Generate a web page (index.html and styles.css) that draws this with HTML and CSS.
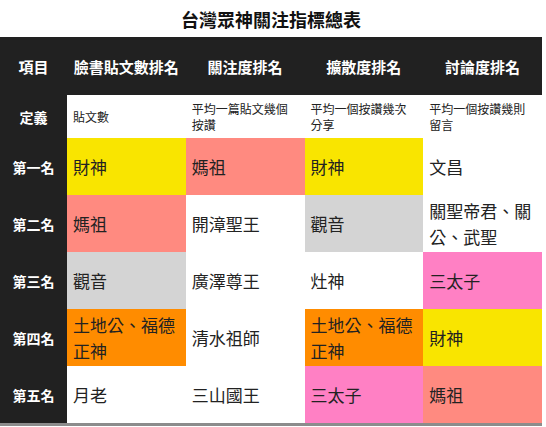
FILE: index.html
```html
<!DOCTYPE html>
<html lang="zh-Hant">
<head>
<meta charset="utf-8">
<link rel="stylesheet" href="styles.css">
</head>
<body>
<div class="page">
  <h1 class="title">台灣眾神關注指標總表</h1>
  <div class="table-wrap">
    <table class="rank">
      <colgroup>
        <col class="c-label"><col><col><col><col>
      </colgroup>
      <thead>
        <tr class="head">
          <th>項目</th>
          <th>臉書貼文數排名</th>
          <th>關注度排名</th>
          <th>擴散度排名</th>
          <th>討論度排名</th>
        </tr>
      </thead>
      <tbody>
        <tr class="def">
          <th>定義</th>
          <td>貼文數</td>
          <td>平均一篇貼文幾個按讚</td>
          <td>平均一個按讚幾次分享</td>
          <td>平均一個按讚幾則留言</td>
        </tr>
        <tr class="row">
          <th>第一名</th>
          <td class="yellow">財神</td>
          <td class="salmon">媽祖</td>
          <td class="yellow">財神</td>
          <td>文昌</td>
        </tr>
        <tr class="row">
          <th>第二名</th>
          <td class="salmon">媽祖</td>
          <td>開漳聖王</td>
          <td class="gray">觀音</td>
          <td>關聖帝君、關公、武聖</td>
        </tr>
        <tr class="row">
          <th>第三名</th>
          <td class="gray">觀音</td>
          <td>廣澤尊王</td>
          <td>灶神</td>
          <td class="pink">三太子</td>
        </tr>
        <tr class="row">
          <th>第四名</th>
          <td class="orange">土地公、福德正神</td>
          <td>清水祖師</td>
          <td class="orange">土地公、福德正神</td>
          <td class="yellow">財神</td>
        </tr>
        <tr class="row">
          <th>第五名</th>
          <td>月老</td>
          <td>三山國王</td>
          <td class="pink">三太子</td>
          <td class="salmon">媽祖</td>
        </tr>
      </tbody>
    </table>
  </div>
</div>
</body>
</html>
```
FILE: styles.css
```css
html, body {
  margin: 0;
  padding: 0;
  background: #ffffff;
}
body {
  font-family: "Noto Sans CJK TC", "Noto Sans", sans-serif;
  color: #222222;
}
.page {
  width: 542px;
}
.title {
  margin: 0;
  height: 37px;
  display: flex;
  align-items: center;
  justify-content: center;
  font-size: 18px;
  font-weight: 700;
  color: #111111;
}
.table-wrap {
  border-bottom: 3px solid #8c8c8c;
}
.rank {
  width: 542px;
  border-collapse: collapse;
  table-layout: fixed;
}
.c-label {
  width: 67px;
}
.rank th,
.rank td {
  padding: 0 6px;
  vertical-align: middle;
}
.rank th {
  background: #212121;
  color: #ffffff;
  font-size: 14px;
  font-weight: 700;
  text-align: center;
}
.head th {
  height: 58px;
  font-size: 15px;
}
.def th,
.def td {
  height: 43px;
}
.def td {
  font-size: 12px;
  line-height: 16px;
  text-align: left;
  color: #222222;
}
.row th,
.row td {
  height: 57px;
}
.row td {
  font-size: 17px;
  line-height: 26px;
  text-align: left;
  color: #222222;
}
.yellow { background: #f9e500; }
.salmon { background: #ff8a80; }
.gray { background: #d4d4d4; }
.orange { background: #ff8c00; }
.pink { background: #ff80c4; }
```
